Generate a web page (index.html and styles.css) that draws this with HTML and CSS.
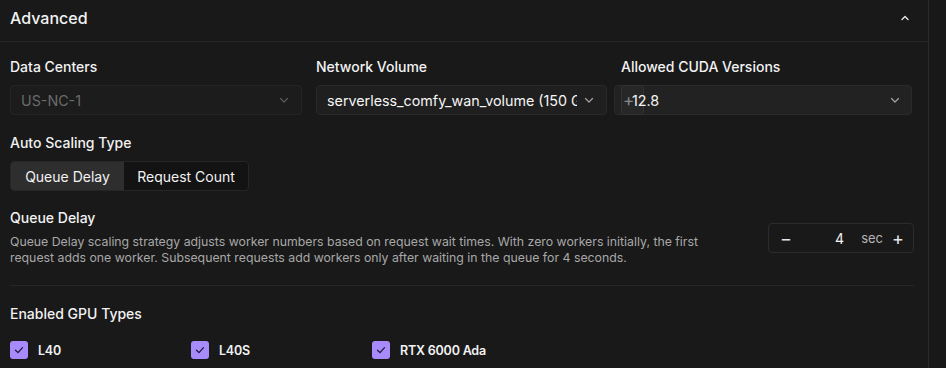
FILE: index.html
```html
<!DOCTYPE html>
<html lang="en">
<head>
    <meta charset="UTF-8">
    <title>Advanced</title>
    <link rel="stylesheet" href="styles.css">
</head>
<body>
    <div class="panel">
        <!-- Шапка -->
        <div class="panel-header">
            <span class="panel-title">Advanced</span>
            <svg class="chevron-up" width="12" height="12" viewBox="0 0 12 12"><path d="M3 7.5 6 4.5 9 7.5" fill="none" stroke="#e5e5e5" stroke-width="1.4" stroke-linecap="round" stroke-linejoin="round"/></svg>
        </div>

        <div class="panel-body">
            <div class="field-row">
                <div class="field">
                    <div class="field-label">Data Centers</div>
                    <div class="select disabled">
                        <span class="select-value">US-NC-1</span>
                        <svg class="chevron" width="12" height="12" viewBox="0 0 12 12"><path d="M2.5 4.5 6 8 9.5 4.5" fill="none" stroke="currentColor" stroke-width="1.2" stroke-linecap="round" stroke-linejoin="round"/></svg>
                    </div>
                </div>
                <div class="field">
                    <div class="field-label">Network Volume</div>
                    <div class="select">
                        <span class="select-value">serverless_comfy_wan_volume (150 GB)</span>
                        <svg class="chevron" width="12" height="12" viewBox="0 0 12 12"><path d="M2.5 4.5 6 8 9.5 4.5" fill="none" stroke="currentColor" stroke-width="1.2" stroke-linecap="round" stroke-linejoin="round"/></svg>
                    </div>
                </div>
                <div class="field">
                    <div class="field-label">Allowed CUDA Versions</div>
                    <div class="select cuda">
                        <span class="plus-tag">+</span>
                        <span class="select-value">12.8</span>
                        <svg class="chevron" width="12" height="12" viewBox="0 0 12 12"><path d="M2.5 4.5 6 8 9.5 4.5" fill="none" stroke="currentColor" stroke-width="1.2" stroke-linecap="round" stroke-linejoin="round"/></svg>
                    </div>
                </div>
            </div>

            <div class="field">
                <div class="field-label">Auto Scaling Type</div>
                <div class="segmented">
                    <span class="segment active">Queue Delay</span>
                    <span class="segment">Request Count</span>
                </div>
            </div>

            <div class="delay-row">
                <div class="delay-text">
                    <div class="delay-title">Queue Delay</div>
                    <p class="delay-desc">Queue Delay scaling strategy adjusts worker numbers based on request wait times. With zero workers initially, the first request adds one worker. Subsequent requests add workers only after waiting in the queue for 4 seconds.</p>
                </div>
                <div class="stepper">
                    <span class="step-btn">&minus;</span>
                    <span class="step-value">4</span>
                    <span class="step-unit">sec</span>
                    <span class="step-btn">+</span>
                </div>
            </div>

            <div class="divider"></div>

            <div class="field">
                <div class="field-label">Enabled GPU Types</div>
                <div class="gpu-list">
                    <label class="gpu">
                        <span class="checkbox"><svg width="12" height="12" viewBox="0 0 12 12"><path d="M2.5 6.2 5 8.6 9.5 3.6" fill="none" stroke="#1b1530" stroke-width="1.2" stroke-linecap="round" stroke-linejoin="round"/></svg></span>
                        L40
                    </label>
                    <label class="gpu">
                        <span class="checkbox"><svg width="12" height="12" viewBox="0 0 12 12"><path d="M2.5 6.2 5 8.6 9.5 3.6" fill="none" stroke="#1b1530" stroke-width="1.2" stroke-linecap="round" stroke-linejoin="round"/></svg></span>
                        L40S
                    </label>
                    <label class="gpu">
                        <span class="checkbox"><svg width="12" height="12" viewBox="0 0 12 12"><path d="M2.5 6.2 5 8.6 9.5 3.6" fill="none" stroke="#1b1530" stroke-width="1.2" stroke-linecap="round" stroke-linejoin="round"/></svg></span>
                        RTX 6000 Ada
                    </label>
                </div>
            </div>
        </div>
    </div>
</body>
</html>
```

FILE: styles.css
```css
* {
    margin: 0;
    padding: 0;
    box-sizing: border-box;
}

body {
    font-family: Inter, "Noto Sans", sans-serif;
    background: #181818;
    color: #f2f2f2;
    width: 946px;
    height: 368px;
    overflow: hidden;
}

.panel {
    width: 929px;
    height: 368px;
    border-right: 1px solid #2a2a2a;
    background: #191919;
}

/* Шапка */
.panel-header {
    height: 42px;
    display: flex;
    align-items: center;
    justify-content: space-between;
    padding: 0 17px 6px 10px;
    border-bottom: 1px solid #262626;
}

.panel-title {
    font-size: 16px;
    font-weight: 500;
}

.panel-body {
    padding: 15px 14px 0 10px;
    display: flex;
    flex-direction: column;
}

.field-row {
    display: grid;
    grid-template-columns: 292px 291px 291px;
    gap: 14px;
    margin-bottom: 18px;
}

.field-label {
    font-size: 14px;
    font-weight: 500;
    line-height: 20px;
    margin-bottom: 8px;
}

.select {
    height: 30px;
    display: flex;
    align-items: center;
    justify-content: space-between;
    padding: 0 11px 0 10px;
    background: #1f1f1f;
    border: 1px solid #2a2a2a;
    border-radius: 4px;
    position: relative;
    color: #a3a3a3;
}

.select-value {
    font-size: 14.3px;
    color: #f5f5f5;
    white-space: nowrap;
    overflow: hidden;
    flex: 1;
    margin-right: 6px;
}

.select.disabled {
    background: #1c1c1c;
    border-color: #242424;
}

.select.disabled .select-value {
    color: #6b6b6b;
}

.select.disabled .chevron {
    color: #5a5a5a;
}

/* мультиселект CUDA чуть шире слева */
.select.cuda {
    background: #222222;
    margin-left: -7px;
    padding-left: 17px;
    padding-right: 10px;
}

.plus-tag {
    position: absolute;
    left: 6px;
    top: -1px;
    bottom: -1px;
    width: 23px;
    background: #272727;
    border: 1px solid #323232;
    border-radius: 3px;
    color: #8a8a8a;
    font-size: 17px;
    line-height: 28px;
    padding-left: 1px;
}

.select.cuda .select-value {
    position: relative;
}

/* Тип масштабирования */
.segmented {
    display: flex;
    width: 239px;
    height: 30px;
    border: 1px solid #262626;
    border-radius: 4px;
    background: #131313;
    overflow: hidden;
}

.segment {
    display: flex;
    align-items: center;
    justify-content: center;
    font-size: 14px;
    white-space: nowrap;
    flex: 1;
}

.segment.active {
    background: #2e2e2e;
    flex: 0 0 113px;
}

.delay-row {
    display: flex;
    justify-content: space-between;
    align-items: flex-start;
    margin-top: 17px;
}

.delay-text {
    width: 720px;
}

.delay-title {
    font-size: 14px;
    font-weight: 500;
    line-height: 20px;
    margin-bottom: 6px;
}

.delay-desc {
    font-size: 12.3px;
    line-height: 16px;
    color: #a8a8a8;
}

.stepper {
    width: 146px;
    height: 30px;
    margin-top: 15px;
    display: flex;
    align-items: center;
    border: 1px solid #2c2c2c;
    border-radius: 4px;
    padding: 0 9px 0 11px;
}

.step-btn {
    font-size: 18px;
    color: #e5e5e5;
    width: 12px;
    text-align: center;
}

.step-value {
    flex: 1;
    text-align: right;
    font-size: 14px;
    padding-right: 17px;
}

.step-unit {
    font-size: 13px;
    color: #b5b5b5;
    margin-right: 9px;
}

.divider {
    height: 1px;
    background: #262626;
    margin: 19px 0 18px;
}

.gpu-list {
    display: grid;
    grid-template-columns: 181px 181px 181px;
    margin-top: 17px;
}

.gpu {
    display: flex;
    align-items: center;
    gap: 10px;
    font-size: 12.5px;
    font-weight: 600;
    letter-spacing: -0.2px;
}

.checkbox {
    width: 18px;
    height: 18px;
    border-radius: 3px;
    background: #a78bfa;
    display: flex;
    align-items: center;
    justify-content: center;
}
```
